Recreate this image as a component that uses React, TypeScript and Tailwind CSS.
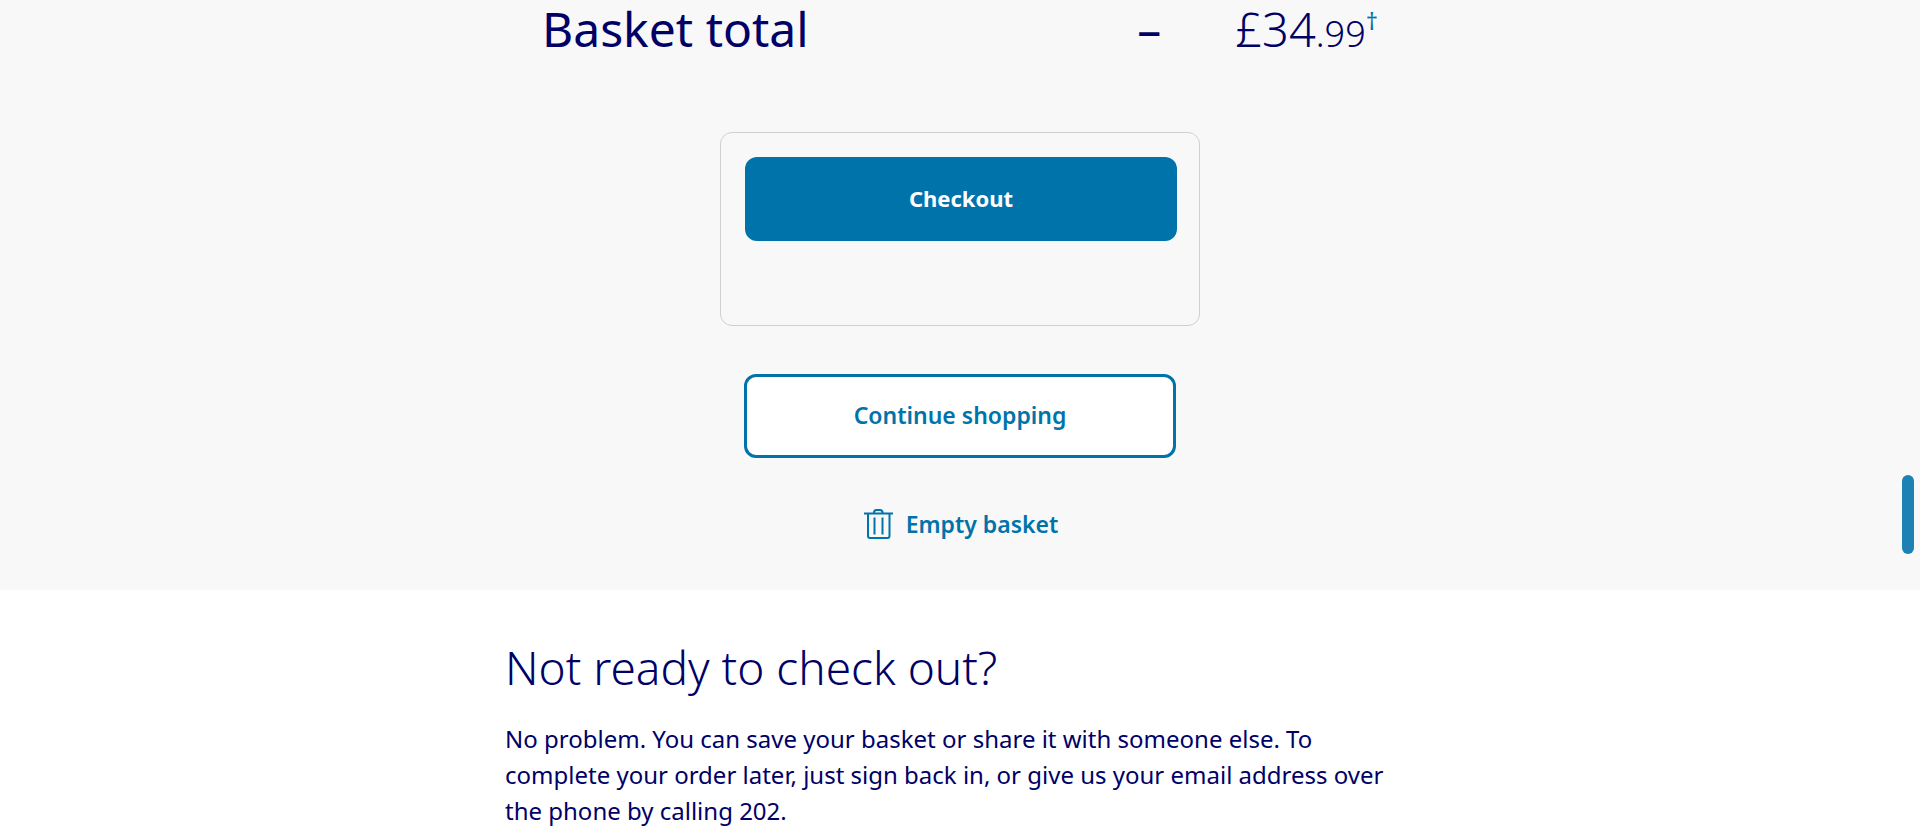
import React from "react";

function TrashIcon() {
  return (
    <svg
      aria-hidden="true"
      className="h-8 w-8 shrink-0"
      viewBox="0 0 32 32"
      fill="none"
      stroke="currentColor"
      strokeWidth="2"
      strokeLinejoin="round"
    >
      <path d="M2 5.500h29" />
      <path d="M12 5.500V4.500a2.500 2.500 0 0 1 2.500-2.500h3.500a2.500 2.500 0 0 1 2.500 2.500v1" />
      <path d="M6 5.500v22.500a2 2 0 0 0 2 2h17.500a2 2 0 0 0 2-2V5.500" />
      <path d="M12.500 9.500v17M20.500 9.500v17" />
    </svg>
  );
}

function BasketSummary() {
  return (
    <section className="bg-[#f8f8f8] px-4 pb-[50px]">
      <div className="mx-auto flex h-[58px] w-full max-w-[840px] items-baseline justify-between pl-[2px] pr-[2px]">
        <h2 className="text-[48px] leading-[58px] font-normal">Basket total</h2>
        <div className="flex items-baseline gap-[74px] font-light">
          <span className="text-[48px] leading-[58px] font-normal">–</span>
          <p className="text-[47px] leading-[58px]">
            £34<span className="text-4xl">.99</span>
            <a href="#terms" className="align-super text-2xl leading-none font-normal text-[#0073aa]">†</a>
          </p>
        </div>
      </div>

      <div className="mx-auto mt-[74px] h-[194px] w-full max-w-[480px] rounded-xl border border-[#d0d0d0] py-6 pr-[22px] pl-6">
        <button
          type="button"
          className="h-[84px] w-full rounded-xl bg-[#0073aa] pb-[2px] text-[22px] font-bold text-white"
        >
          Checkout
        </button>
      </div>

      <div className="mt-12 flex flex-col items-center gap-[50px]">
        <button
          type="button"
          className="h-[84px] w-full max-w-[432px] rounded-xl border-3 border-[#0073aa] bg-white pb-[2px] text-[23px] font-semibold text-[#0073aa]"
        >
          Continue shopping
        </button>
        <button type="button" className="flex h-8 items-center gap-3 text-[23px] font-semibold text-[#0073aa]">
          <TrashIcon />
          Empty basket
        </button>
      </div>
    </section>
  );
}

function NotReady() {
  return (
    <section className="bg-white px-4 pt-12 pb-4">
      <div className="mx-auto w-full max-w-[910px]">
        <h2 className="text-[46px] leading-[58px] font-light">Not ready to check out?</h2>
        <p className="mt-[25px] text-2xl leading-9">
          No problem. You can save your basket or share it with someone else. To complete your order
          later, just sign back in, or give us your email address over the phone by calling 202.
        </p>
      </div>
    </section>
  );
}

export default function App() {
  return (
    <main className="min-h-screen bg-white font-['Noto_Sans','Open_Sans',sans-serif] text-[#000066]">
      <BasketSummary />
      <NotReady />
      <div className="fixed top-[475px] right-[6px] h-[79px] w-3 rounded-full bg-[#1d82b3]" />
    </main>
  );
}
